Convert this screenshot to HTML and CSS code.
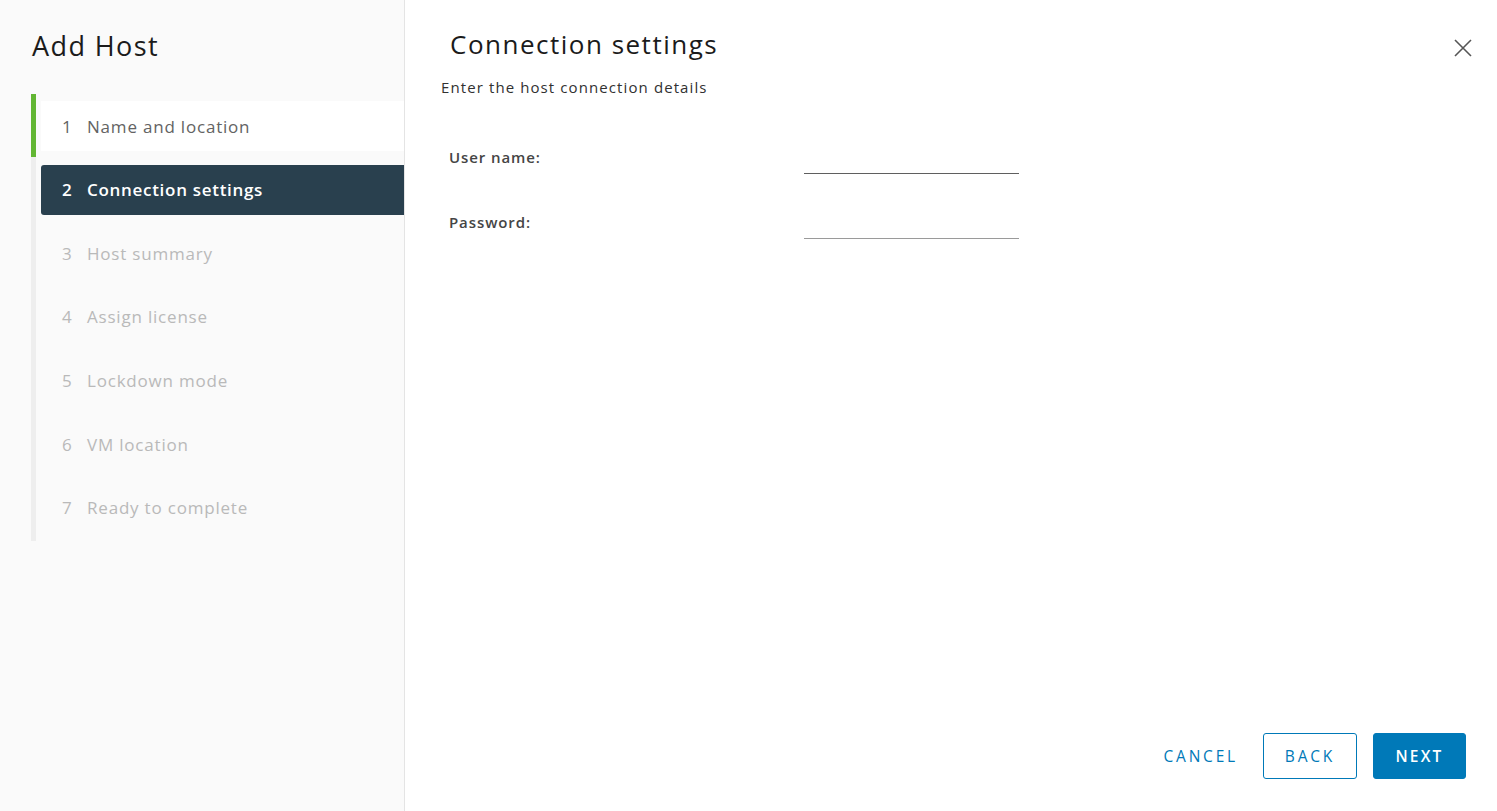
FILE: index.html
```html
<!DOCTYPE html>
<html>
<head>
<meta charset="utf-8">
<link rel="stylesheet" href="styles.css">
</head>
<body>
<div class="dialog">
  <aside class="side">
    <h1 class="side-title">Add Host</h1>
    <ol class="steps">
      <li class="step done"><span class="num">1</span><span>Name and location</span></li>
      <li class="step active"><span class="num">2</span><span>Connection settings</span></li>
      <li class="step"><span class="num">3</span><span>Host summary</span></li>
      <li class="step"><span class="num">4</span><span>Assign license</span></li>
      <li class="step"><span class="num">5</span><span>Lockdown mode</span></li>
      <li class="step"><span class="num">6</span><span>VM location</span></li>
      <li class="step"><span class="num">7</span><span>Ready to complete</span></li>
    </ol>
  </aside>
  <main class="main">
    <header class="main-head">
      <h2 class="main-title">Connection settings</h2>
      <button class="close" aria-label="Close">
        <svg width="20" height="20" viewBox="0 0 20 20"><path d="M2 2 L18 18 M18 2 L2 18" stroke="#565656" stroke-width="1.6" fill="none"/></svg>
      </button>
    </header>
    <p class="subtitle">Enter the host connection details</p>
    <form class="form">
      <div class="row">
        <label class="lbl">User name:</label>
        <div class="field dark"></div>
      </div>
      <div class="row">
        <label class="lbl">Password:</label>
        <div class="field"></div>
      </div>
    </form>
    <footer class="actions">
      <button class="btn link" type="button">CANCEL</button>
      <button class="btn outline" type="button">BACK</button>
      <button class="btn primary" type="button">NEXT</button>
    </footer>
  </main>
</div>
</body>
</html>
```
FILE: styles.css
```css
* { box-sizing: border-box; }
html, body { margin: 0; padding: 0; height: 100%; }
body {
  font-family: "Open Sans", "Noto Sans", sans-serif;
  color: #333;
  background: #fff;
}
.dialog {
  display: flex;
  width: 1497px;
  height: 811px;
}
.side {
  width: 405px;
  flex: none;
  background: #fafafa;
  border-right: 1px solid #e4e4e4;
  padding: 28px 0 0 31px;
}
.side-title {
  margin: 0 0 0 1px;
  font-size: 27px;
  font-weight: 400;
  color: #1b1b1b;
  line-height: 36px;
  letter-spacing: 1.4px;
}
.steps {
  list-style: none;
  margin: 30px 0 0 0;
  padding: 7px 0 8px 5px;
  border-left: 5px solid #eeeeee;
  position: relative;
  display: flex;
  flex-direction: column;
  gap: 13.67px;
}
.steps::before {
  content: "";
  position: absolute;
  left: -5px;
  top: 0;
  width: 5px;
  height: 63px;
  background: #62b633;
}
.step {
  height: 50px;
  display: flex;
  align-items: center;
  padding-left: 21px;
  font-size: 17px;
  color: #b9b9b9;
  letter-spacing: 0.8px;
}
.step .num {
  width: 25px;
  flex: none;
  letter-spacing: 0;
}
.step.done {
  background: #fff;
  color: #636363;
}
.step.active {
  background: #29404e;
  color: #fff;
  font-weight: 600;
  letter-spacing: 0.7px;
  border-radius: 3px 0 0 3px;
}
.main {
  flex: 1;
  display: flex;
  flex-direction: column;
  padding: 26px 24px 32px 36px;
}
.main-head {
  display: flex;
  justify-content: space-between;
  align-items: center;
}
.main-title {
  margin: 0 0 0 9px;
  font-size: 26px;
  font-weight: 400;
  color: #1b1b1b;
  line-height: 36px;
  letter-spacing: 1.5px;
}
.close {
  border: 0;
  background: none;
  padding: 0;
  margin: 0;
  width: 20px;
  height: 20px;
  margin-top: 8px;
}
.subtitle {
  margin: 15px 0 0 0;
  font-size: 15px;
  line-height: 20px;
  color: #313131;
  letter-spacing: 1.1px;
}
.form {
  margin-top: 40px;
  display: flex;
  flex-direction: column;
  gap: 28px;
}
.row {
  display: flex;
  align-items: flex-end;
  height: 37px;
}
.lbl {
  width: 363px;
  padding-left: 8px;
  font-size: 15px;
  font-weight: 600;
  color: #454545;
  align-self: center;
  margin-top: 2px;
  letter-spacing: 0.9px;
}
.field {
  width: 215px;
  border-bottom: 1px solid #9a9a9a;
}
.field.dark { border-bottom-color: #5f5f5f; }
.actions {
  margin-top: auto;
  display: flex;
  justify-content: flex-end;
  align-items: center;
  gap: 16px;
  padding-right: 7px;
}
.btn {
  font-family: inherit;
  font-size: 15.5px;
  letter-spacing: 2.8px;
  height: 46px;
  padding: 0;
  border-radius: 3px;
  cursor: pointer;
}
.btn.link {
  background: none;
  border: 0;
  color: #0079b8;
  padding: 0 9px 0 0;
}
.btn.outline {
  background: #fff;
  border: 1px solid #0079b8;
  color: #0079b8;
  width: 94px;
}
.btn.primary {
  background: #0079b8;
  border: 1px solid #0079b8;
  color: #fff;
  width: 93px;
  font-weight: 600;
  letter-spacing: 2.2px;
}
```
